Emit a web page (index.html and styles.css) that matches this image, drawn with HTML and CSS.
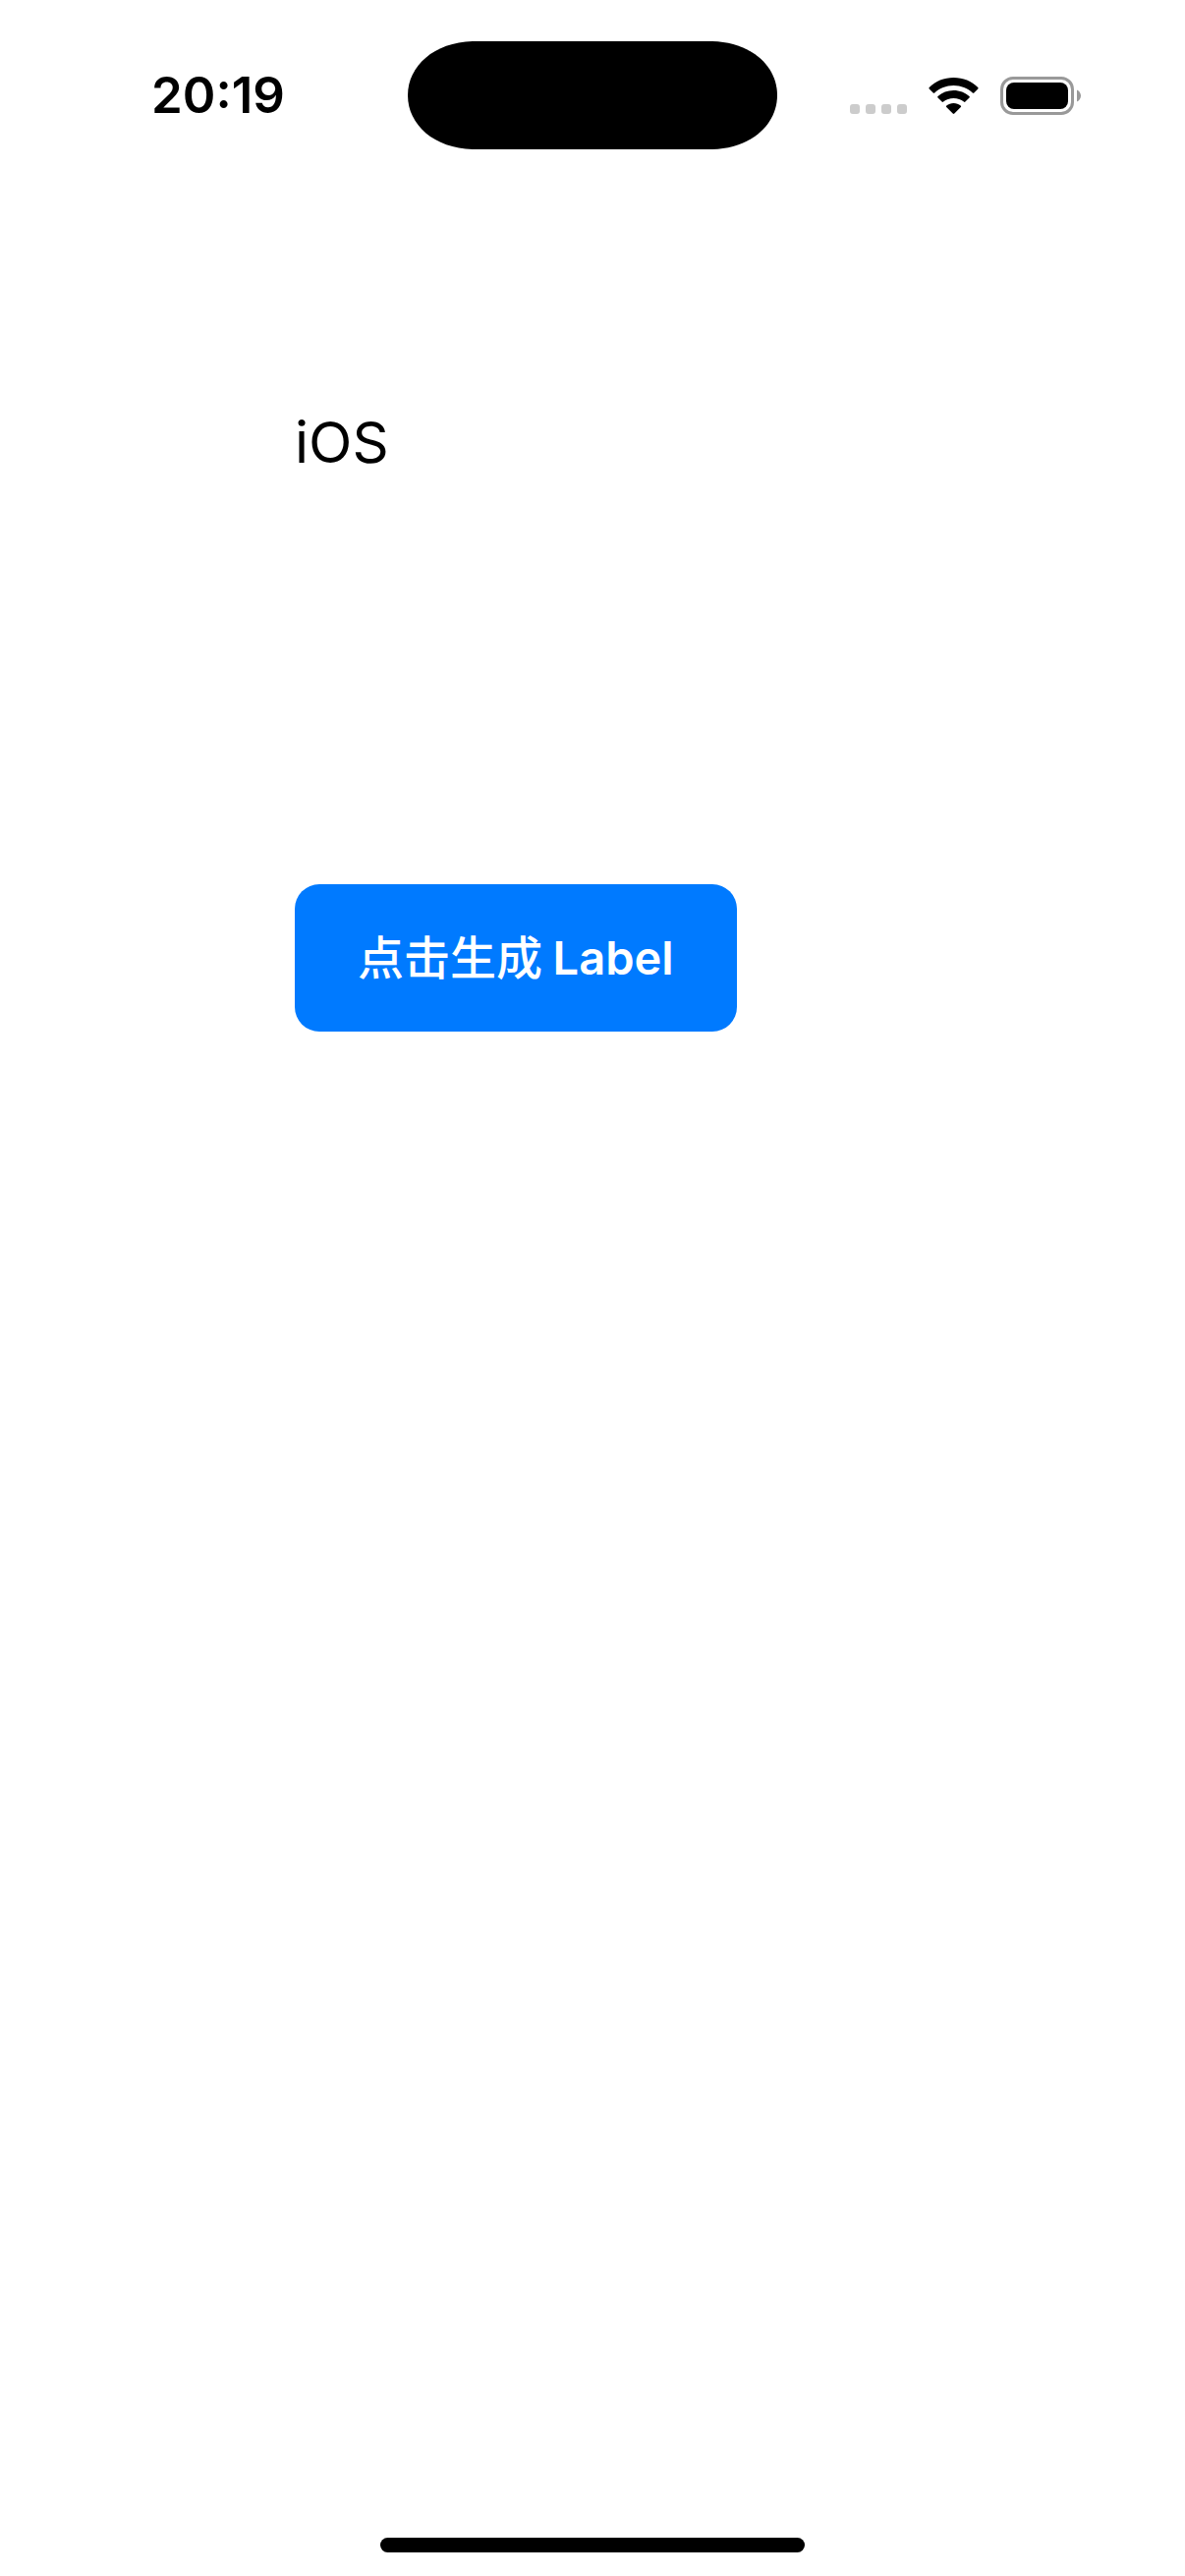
FILE: index.html
```html
<!DOCTYPE html>
<html lang="zh-CN">
<head>
    <meta charset="UTF-8">
    <meta name="viewport" content="width=device-width, initial-scale=1.0">
    <title>iOS</title>
    <link rel="stylesheet" href="styles.css">
</head>
<body>

<header class="status-bar">
    <time class="time">20:19</time>
    <svg class="island" width="376" height="110" viewBox="0 0 376 110" aria-hidden="true">
        <path d="M66 0H310C349 1 376 25 376 55S349 109 310 110H66C27 109 0 85 0 55S27 1 66 0Z"/>
    </svg>
    <div class="indicators">
        <svg class="signal" width="58" height="38" viewBox="0 0 58 38" aria-hidden="true">
            <rect x="0" y="28" width="10" height="10" rx="3"/>
            <rect x="16" y="28" width="10" height="10" rx="3"/>
            <rect x="32" y="28" width="10" height="10" rx="3"/>
            <rect x="48" y="28" width="10" height="10" rx="3"/>
        </svg>
        <svg width="51" height="38" viewBox="0 0 51 38" aria-hidden="true">
            <path d="M25.5 1C35.2 1 43.9 4.7 50.3 10.9Q51 11.7 50.3 12.4L46.3 16.4Q45.6 17.1 44.8 16.4C39.7 11.8 33 9 25.5 9S11.3 11.8 6.2 16.4Q5.4 17.1 4.7 16.4L.7 12.4Q0 11.7 .7 10.9C7.1 4.7 15.8 1 25.5 1Z"/>
            <path d="M25.5 14C31.6 14 37.2 16.3 41.5 20.1Q42.3 20.8 41.5 21.6L37.4 25.6Q36.7 26.2 35.9 25.6C33.1 23.3 29.5 22 25.5 22S17.9 23.3 15.1 25.6Q14.3 26.2 13.6 25.6L9.5 21.6Q8.7 20.8 9.5 20.1C13.8 16.3 19.4 14 25.5 14Z"/>
            <path d="M25.5 27C28.2 27 30.7 27.9 32.7 29.6Q33.5 30.3 32.8 31.1L26.3 37.6Q25.5 38.3 24.7 37.6L18.2 31.1Q17.5 30.3 18.3 29.6C20.3 27.9 22.8 27 25.5 27Z"/>
        </svg>
        <svg width="82" height="39" viewBox="0 0 82 39" aria-hidden="true">
            <rect class="battery-shell" x="1.5" y="1.5" width="72" height="36" rx="11.5"/>
            <rect x="6" y="6" width="63" height="27" rx="8"/>
            <path class="battery-cap" d="M78 13.5C80.5 14.5 82 17 82 19.5S80.5 24.5 78 25.5Z"/>
        </svg>
    </div>
</header>

<main class="content">
    <p class="label">iOS</p>
    <button type="button" class="generate"><span class="cjk">点击生成 </span>Label</button>
</main>

<footer class="home-indicator"></footer>

</body>
</html>
```
FILE: styles.css
```css
* {
    box-sizing: border-box;
}
body {
    margin: 0;
    min-height: 100vh;
    display: flex;
    flex-direction: column;
    background: #fff;
    color: #000;
    font-family: Inter, "Noto Sans CJK SC", sans-serif;
}
svg {
    display: block;
}
.status-bar {
    display: grid;
    grid-template-columns: 1fr auto 1fr;
    align-items: center;
    padding-top: 42px;
}
.time {
    padding-left: 29px;
    text-align: center;
    font-size: 51px;
    font-weight: 600;
    line-height: 62px;
}
.indicators {
    display: flex;
    justify-content: flex-end;
    align-items: center;
    gap: 22px;
    padding-right: 106px;
}
.signal {
    fill: #ccc;
}
.battery-shell {
    fill: none;
    stroke: #999;
    stroke-width: 3;
}
.battery-cap {
    fill: #999;
}
.content {
    flex: 1;
    display: flex;
    flex-direction: column;
    align-items: flex-start;
    padding: 262px 300px 0;
}
.label {
    margin: 0 0 414px;
    font-size: 58px;
    line-height: 72px;
}
.generate {
    padding: 45px 64px;
    border: none;
    border-radius: 25px;
    background: #007aff;
    color: #fff;
    font-family: inherit;
    font-size: 47px;
    font-weight: 600;
    line-height: 60px;
    white-space: nowrap;
    cursor: pointer;
}
.cjk {
    font-family: "Noto Sans CJK SC", sans-serif;
    font-weight: 500;
    line-height: 1;
}
.home-indicator {
    align-self: center;
    width: 432px;
    height: 15px;
    margin-bottom: 24px;
    border-radius: 8px;
    background: #000;
}
```
